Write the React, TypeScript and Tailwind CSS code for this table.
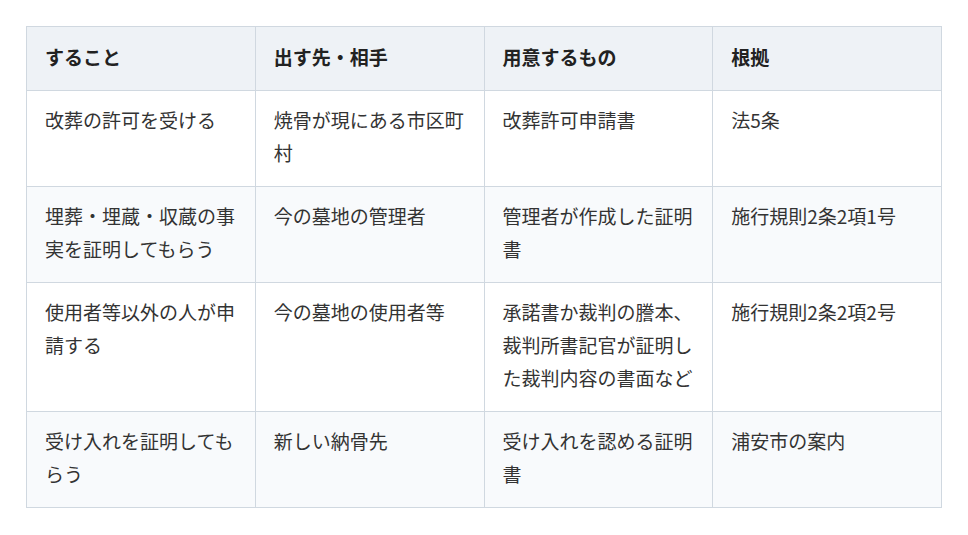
import React from "react";

const rows = [
  ["改葬の許可を受ける", "焼骨が現にある市区町村", "改葬許可申請書", "法5条"],
  ["埋葬・埋蔵・収蔵の事実を証明してもらう", "今の墓地の管理者", "管理者が作成した証明書", "施行規則2条2項1号"],
  ["使用者等以外の人が申請する", "今の墓地の使用者等", "承諾書か裁判の謄本、裁判所書記官が証明した裁判内容の書面など", "施行規則2条2項2号"],
  ["受け入れを証明してもらう", "新しい納骨先", "受け入れを認める証明書", "浦安市の案内"],
];

const headers = ["すること", "出す先・相手", "用意するもの", "根拠"];

export default function App() {
  return (
    <div className="w-[968px] h-[535px] bg-white pt-[26px] pl-[26px]" style={{ fontFamily: '"Noto Sans CJK JP", "Noto Sans", sans-serif' }}>
      <table className="w-[916px] table-fixed border-collapse text-[19px] leading-[33px] text-[#333]">
        <thead>
          <tr className="bg-[#eef2f6]">
            {headers.map((h) => (
              <th key={h} className="border border-[#d0d8e0] px-[18px] pt-[13px] pb-[17px] text-left font-bold text-[#222] align-top">
                {h}
              </th>
            ))}
          </tr>
        </thead>
        <tbody>
          {rows.map((r, i) => (
            <tr key={i} className={i % 2 === 1 ? "bg-[#f8fafc]" : "bg-white"}>
              {r.map((c, j) => (
                <td key={j} className="border border-[#d0d8e0] px-[18px] pt-[12px] pb-[17px] align-top">
                  {c}
                </td>
              ))}
            </tr>
          ))}
        </tbody>
      </table>
    </div>
  );
}
